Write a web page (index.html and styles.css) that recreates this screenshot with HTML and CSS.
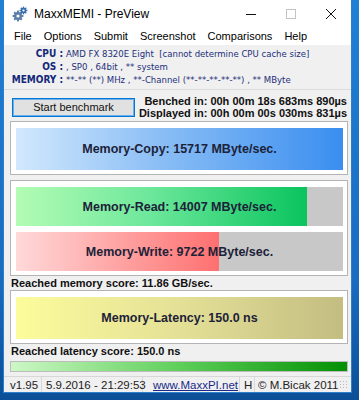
FILE: index.html
```html
<!doctype html>
<html lang="en">

<head>
  <meta charset="UTF-8" />
  <title>MaxxMEMI - PreView</title>
  <link rel="stylesheet" href="styles.css">
</head>

<body>
  <div class="window">
    <div class="titlebar">
      <svg class="app-icon" viewBox="0 0 16 16">
        <g fill="#5b7fa6">
          <circle cx="6" cy="10" r="4" />
          <rect x="5" y="4.6" width="2" height="10.8" />
          <rect x="0.6" y="9" width="10.8" height="2" />
          <rect x="5" y="4.6" width="2" height="10.8" transform="rotate(45 6 10)" />
          <rect x="5" y="4.6" width="2" height="10.8" transform="rotate(-45 6 10)" />
        </g>
        <circle cx="6" cy="10" r="1.6" fill="#fff" />
        <g fill="#3a6fb0">
          <circle cx="11.5" cy="4.5" r="2.8" />
          <rect x="10.8" y="0.6" width="1.4" height="7.8" />
          <rect x="7.6" y="3.8" width="7.8" height="1.4" />
          <rect x="10.8" y="0.6" width="1.4" height="7.8" transform="rotate(45 11.5 4.5)" />
          <rect x="10.8" y="0.6" width="1.4" height="7.8" transform="rotate(-45 11.5 4.5)" />
        </g>
        <circle cx="11.5" cy="4.5" r="1.1" fill="#fff" />
      </svg>
      <span class="title">MaxxMEMI - PreView</span>
      <div class="caption-buttons">
        <span class="cap-btn">
          <svg viewBox="0 0 10 10"><path d="M0 5.5h10" stroke="#111" stroke-width="1" /></svg>
        </span>
        <span class="cap-btn disabled">
          <svg viewBox="0 0 10 10"><rect x="0.5" y="0.5" width="9" height="9" fill="none" stroke="#c4c4c4" /></svg>
        </span>
        <span class="cap-btn">
          <svg viewBox="0 0 10 10"><path d="M0 0L10 10M10 0L0 10" stroke="#111" stroke-width="1" /></svg>
        </span>
      </div>
    </div>

    <nav class="menubar">
      <span>File</span>
      <span>Options</span>
      <span>Submit</span>
      <span>Screenshot</span>
      <span>Comparisons</span>
      <span>Help</span>
    </nav>

    <section class="sysinfo">
      <div class="info-row"><b>CPU :</b><span>AMD FX 8320E Eight&nbsp; [cannot determine CPU cache size]</span></div>
      <div class="info-row"><b>OS :</b><span>, SP0 , 64bit , ** system</span></div>
      <div class="info-row"><b>MEMORY :</b><span>**-** (**) MHz , **-Channel (**-**-**-**-**) , ** MByte</span></div>
    </section>

    <div class="bench-row">
      <button class="start-btn">Start benchmark</button>
      <div class="timing">
        <div>Benched in: 00h 00m 18s 683ms 890µs</div>
        <div>Displayed in: 00h 00m 00s 030ms 831µs</div>
      </div>
    </div>

    <div class="panel">
      <div class="bar tall copy">
        <div class="fill" style="width: 100%"></div>
        <span class="bar-label">Memory-Copy: 15717 MByte/sec.</span>
      </div>
    </div>

    <div class="panel">
      <div class="bar read">
        <div class="fill" style="width: 89%"></div>
        <span class="bar-label">Memory-Read: 14007 MByte/sec.</span>
      </div>
      <div class="bar write">
        <div class="fill" style="width: 62%"></div>
        <span class="bar-label">Memory-Write: 9722 MByte/sec.</span>
      </div>
    </div>

    <div class="score">Reached memory score: 11.86 GB/sec.</div>

    <div class="panel">
      <div class="bar tall latency">
        <div class="fill" style="width: 100%"></div>
        <span class="bar-label">Memory-Latency: 150.0 ns</span>
      </div>
    </div>

    <div class="score">Reached latency score: 150.0 ns</div>

    <div class="progress"><div class="progress-fill"></div></div>

    <footer class="statusbar">
      <span class="pane ver">v1.95</span>
      <span class="pane date">5.9.2016 - 21:29:53</span>
      <span class="pane link">www.MaxxPI.net</span>
      <span class="pane mode">H</span>
      <span class="pane last">© M.Bicak 2011</span>
      <span class="grip"></span>
    </footer>
  </div>
</body>

</html>
```

FILE: styles.css
```css
* {
  margin: 0;
  padding: 0;
  box-sizing: border-box;
}

body {
  width: 359px;
  height: 400px;
  overflow: hidden;
  background: linear-gradient(180deg, #2080d4 0%, #1a6cbf 70%, #0c4f96 100%);
  font-family: "Liberation Sans", Arial, sans-serif;
  color: #111;
}

.window {
  margin-left: 3px;
  width: 349px;
  height: 393px;
  background: #f0f0f0;
  border: 1px solid #2b7fcc;
  border-top: none;
  display: flex;
  flex-direction: column;
}

.window > * {
  flex-shrink: 0;
}

/* title + menu */
.titlebar {
  height: 27px;
  background: #fff;
  display: flex;
  align-items: center;
  padding-left: 8px;
}

.app-icon {
  width: 16px;
  height: 16px;
  margin-right: 6px;
}

.title {
  font-size: 12px;
  color: #000;
  flex: 1;
}

.caption-buttons {
  display: flex;
  align-self: stretch;
}

.cap-btn {
  width: 40px;
  display: flex;
  align-items: center;
  justify-content: center;
}

.cap-btn svg {
  width: 10px;
  height: 10px;
}

.menubar {
  height: 18px;
  background: #fff;
  display: flex;
  align-items: center;
  padding-left: 4px;
  font-size: 11px;
  color: #000;
  white-space: nowrap;
}

.menubar span {
  padding: 0 6px;
}

/* system info */
.sysinfo {
  padding: 2px 0 3px;
  border-bottom: 1px solid #dcdcdc;
  font-family: "DejaVu Sans Condensed", "Liberation Sans", sans-serif;
  font-size: 10px;
  color: #1c2f7a;
  white-space: nowrap;
}

.info-row {
  display: flex;
  height: 13px;
  align-items: center;
}

.info-row b {
  width: 59px;
  text-align: right;
  margin-right: 3px;
  color: #14287a;
}

.info-row span {
  font-size: 9.5px;
}

/* benchmark row */
.bench-row {
  display: flex;
  align-items: center;
  justify-content: space-between;
  padding: 3px 4px 0 8px;
  height: 31px;
}

.start-btn {
  width: 123px;
  height: 19px;
  background: #e1e1e1;
  border: 1px solid #0078d7;
  box-shadow: inset 0 0 0 1px #6fb0e8;
  font-family: "Liberation Sans", Arial, sans-serif;
  font-size: 11px;
  color: #111;
}

.timing {
  font-size: 11px;
  font-weight: bold;
  text-align: right;
  line-height: 12px;
  color: #111;
  white-space: nowrap;
}

/* result panels */
.panel {
  margin: 0 3px 5px 6px;
  background: #fff;
  border: 1px solid #b4b4b4;
  padding: 6px 4px 4px 5px;
  display: flex;
  flex-direction: column;
  gap: 6px;
}

.bar {
  position: relative;
  height: 39px;
  background: #c8c8c8;
  display: flex;
  align-items: center;
  justify-content: center;
}

.bar.tall {
  height: 42px;
}

.fill {
  position: absolute;
  left: 0;
  top: 0;
  bottom: 0;
}

.bar-label {
  position: relative;
  font-size: 12.5px;
  font-weight: bold;
  color: #1c2238;
  white-space: nowrap;
}

.copy .fill {
  background: linear-gradient(90deg, #d2e8fd 0%, #89bdf5 45%, #3a8ef0 100%);
}

.read .fill {
  background: linear-gradient(90deg, #b4fcb4 0%, #6ee89c 45%, #0ac45e 100%);
}

.write .fill {
  background: linear-gradient(90deg, #ffd9d9 0%, #ffa4a4 50%, #ff7070 100%);
}

.latency .fill {
  background: linear-gradient(90deg, #fcfc9c 0%, #e4e096 50%, #c4bd82 100%);
}

.score {
  font-size: 11px;
  font-weight: bold;
  padding-left: 7px;
  height: 14px;
  line-height: 14px;
  margin-top: -5px;
  white-space: nowrap;
}

/* progress */
.progress {
  margin: 3px 3px 0 6px;
  height: 11px;
  border: 1px solid #bcbcbc;
  background: #e6e6e6;
}

.progress-fill {
  height: 100%;
  background: linear-gradient(90deg, #cdf8c6 0%, #5ecf5a 50%, #039003 100%);
}

/* status */
.statusbar {
  margin-top: 4px;
  flex: 1;
  display: flex;
  align-items: center;
  border-top: 1px solid #d7d7d7;
  font-size: 11.5px;
  color: #222;
  white-space: nowrap;
}

.pane {
  flex-shrink: 0;
  border-right: 1px solid #d7d7d7;
  height: 100%;
  display: flex;
  align-items: center;
}

.pane.ver {
  width: 38px;
  padding-left: 6px;
}

.pane.date {
  width: 101px;
  padding-left: 4px;
}

.pane.link {
  width: 97px;
  padding-left: 10px;
  color: #1a2a8a;
  text-decoration: underline;
}

.pane.mode {
  width: 15px;
  padding-left: 4px;
}

.pane.last {
  border-right: none;
  flex: 1;
  flex-shrink: 1;
  min-width: 0;
  padding-left: 3px;
}

.grip {
  flex-shrink: 0;
  width: 10px;
  height: 10px;
  align-self: flex-end;
  margin: 0 2px 2px 0;
  background:
    radial-gradient(circle, #b8b8b8 0.8px, transparent 1px) 0 0 / 3px 3px;
}
```
